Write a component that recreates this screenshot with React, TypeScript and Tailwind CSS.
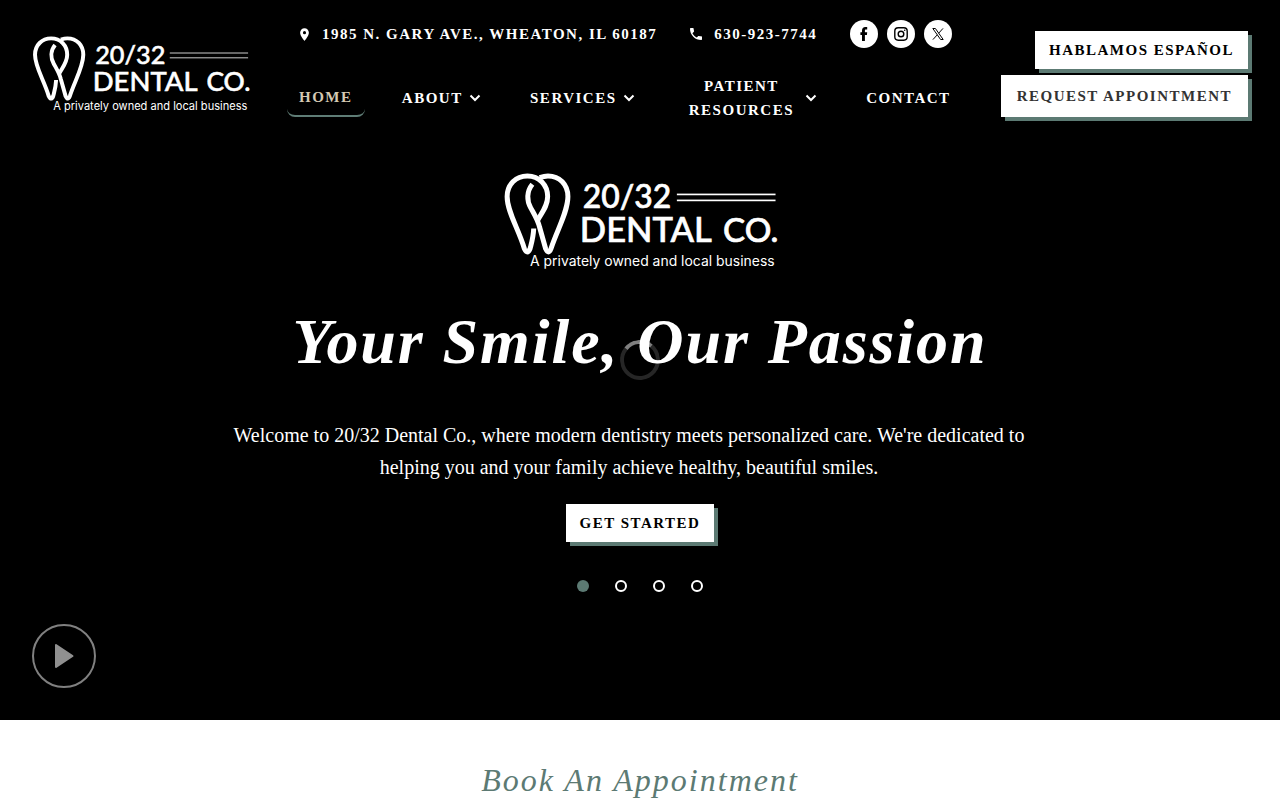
import React from "react";
import { MdLocationOn, MdPhone } from "react-icons/md";

function Logo({ className, lines }: { className: string; lines: string }) {
  return (
    <svg
      viewBox="39 38 822 292"
      className={`overflow-visible ${className}`}
      role="img"
      aria-label="20/32 Dental Co."
    >
      <g fill="none" stroke="#fff" strokeWidth="15" strokeLinejoin="round">
        <path d="M130 205 C129 232 123 250 119 266 Q111 285 102 266 C84 205 50 155 50 109 C50 73 76 47 111 47 C147 47 172 74 172 109 C172 137 156 155 142 180" />
        <path d="M126 72 C108 94 109 122 121 143 C133 165 143 180 148 202 L166 266 Q175 285 182 266 C200 210 233 155 233 109 C233 73 208 47 173 47 Q162 47 148 52" />
      </g>
      <g className={lines}>
        <rect x="561" y="100" width="297" height="5" />
        <rect x="561" y="118" width="297" height="5" />
      </g>
      <g fill="#fff" stroke="#fff" strokeWidth="2" fontWeight="500" className="font-['Lato']">
        <text x="278" y="143" fontSize="96">20/32</text>
        <text x="269" y="246" fontSize="104">DENTAL</text>
        <text x="700" y="246" fontSize="100">CO.</text>
      </g>
      <text x="119" y="318" fontSize="42" fill="#fff" className="font-['Inter']">
        A privately owned and local business
      </text>
    </svg>
  );
}

function Chevron() {
  return (
    <svg viewBox="0 0 12 8" className="h-2 w-3 shrink-0" aria-hidden="true">
      <path d="M1.5 1.5 L6 6 L10.5 1.5" fill="none" stroke="#fff" strokeWidth="2" />
    </svg>
  );
}

function FacebookMark() {
  return (
    <svg viewBox="0 0 14 14" className="size-[14px]" aria-hidden="true">
      <path
        d="M5 14 V7.9 H3.4 V5.2 H5 V3.6 C5 1.3 6.3 0.1 8.3 0.1 H10.2 V2.6 H9 C8.1 2.6 7.9 3 7.9 3.8 V5.2 H10.2 L9.9 7.9 H7.9 V14 Z"
        fill="currentColor"
      />
    </svg>
  );
}

function InstagramMark() {
  return (
    <svg viewBox="0 0 14 14" className="size-[14px]" aria-hidden="true">
      <g fill="none" stroke="currentColor" strokeWidth="1.4">
        <rect x="0.8" y="0.8" width="12.4" height="12.4" rx="3.4" />
        <circle cx="7" cy="7" r="2.8" />
      </g>
      <circle cx="10.7" cy="3.3" r="0.8" fill="currentColor" />
    </svg>
  );
}

function XMark() {
  return (
    <svg viewBox="0 0 12 12" className="size-3" aria-hidden="true">
      <g fill="none" stroke="currentColor" strokeWidth="1">
        <path d="M0.8 0.5 H3.4 L11.2 11.5 H8.6 Z" />
        <path d="M11 0.4 L6.6 5.3 M5.3 6.8 L0.9 11.6" />
      </g>
    </svg>
  );
}

const menus = [
  { label: "About", more: true },
  { label: "Services", more: true },
  { label: "Patient Resources", more: true },
  { label: "Contact", more: false },
];

const caps = "text-[15px] leading-6 font-bold tracking-[1.5px] uppercase";
const social = "flex size-7 items-center justify-center rounded-full bg-white text-black";

export default function App() {
  return (
    <div className="bg-white font-['Liberation_Serif',serif]">
      <div className="relative flex flex-col bg-black text-white">
        <header className="flex items-start px-8 pt-5">
          <a href="#home" className="mt-4 block shrink-0">
            <Logo className="h-[77px] w-[217px]" lines="fill-[#9a9a9a]" />
          </a>

          <div className="ml-[38px] flex-1">
            <div className="flex items-center pl-[10px]">
              <a href="#map" className={`${caps} flex items-center gap-[10px]`}>
                <MdLocationOn className="size-[15px]" />
                1985 N. Gary Ave., Wheaton, IL 60187
              </a>
              <a href="tel:630-923-7744" className={`${caps} ml-[31px] flex items-center gap-[10px]`}>
                <MdPhone className="size-4" />
                630-923-7744
              </a>
              <div className="ml-[33px] flex gap-[9px]">
                <a href="#facebook" aria-label="Facebook" className={social}>
                  <FacebookMark />
                </a>
                <a href="#instagram" aria-label="Instagram" className={social}>
                  <InstagramMark />
                </a>
                <a href="#x" aria-label="X" className={social}>
                  <XMark />
                </a>
              </div>
            </div>

            <nav className="mt-[26px] flex h-12 items-center justify-between">
              <a
                href="#home"
                className={`${caps} rounded-lg border-b-2 border-[#5f7d76] px-3 py-1.5 text-[#d5c9b3]`}
              >
                Home
              </a>
              {menus.map((m) => (
                <a
                  key={m.label}
                  href={`#${m.label}`}
                  className={`${caps} flex items-center gap-1.5 px-3 text-center`}
                >
                  <span className={m.label === "Patient Resources" ? "w-[115px]" : ""}>{m.label}</span>
                  {m.more && <Chevron />}
                </a>
              ))}
            </nav>
          </div>

          <div className="mt-[11px] ml-[38px] flex shrink-0 flex-col items-end gap-1.5">
            <a
              href="#espanol"
              className={`${caps} bg-white px-3.5 py-[7px] text-black shadow-[4px_4px_0_#5c7a73]`}
            >
              Hablamos Español
            </a>
            <a
              href="#request"
              className={`${caps} bg-white px-4 py-[9px] text-[#333] shadow-[4px_4px_0_#5c7a73]`}
            >
              Request Appointment
            </a>
          </div>
        </header>

        <main className="flex flex-col items-center px-8 pt-[51px] pb-8">
          <Logo className="h-[97px] w-[274px]" lines="fill-white" />
          <h1 className="mt-8 text-center text-[64px] leading-[80px] font-bold tracking-[0.03em] italic">
            Your Smile, Our Passion
          </h1>
          <p className="mt-[37px] max-w-[822px] pr-[22px] text-center text-xl leading-8">
            Welcome to 20/32 Dental Co., where modern dentistry meets personalized care. We're
            dedicated to helping you and your family achieve healthy, beautiful smiles.
          </p>
          <a
            href="#start"
            className={`${caps} mt-[21px] bg-white px-3.5 py-[7px] text-black shadow-[4px_4px_0_#5c7a73]`}
          >
            Get Started
          </a>
          <div className="mt-[38px] flex gap-[26px]">
            <button aria-label="Slide 1" className="size-3 rounded-full bg-[#5c7a73]" />
            <button aria-label="Slide 2" className="size-3 rounded-full border-2 border-white" />
            <button aria-label="Slide 3" className="size-3 rounded-full border-2 border-white" />
            <button aria-label="Slide 4" className="size-3 rounded-full border-2 border-white" />
          </div>
          <button
            aria-label="Play"
            className="mt-8 flex size-16 items-center justify-center self-start rounded-full border-2 border-[#808080]"
          >
            <svg viewBox="0 0 20 26" className="h-[26px] w-5" aria-hidden="true">
              <path
                d="M2 2 L18.5 13 L2 24 Z"
                fill="#909090"
                stroke="#909090"
                strokeWidth="2"
                strokeLinejoin="round"
              />
            </svg>
          </button>
        </main>

        <div className="pointer-events-none absolute top-1/2 left-1/2 size-10 -translate-1/2 -rotate-6 rounded-full border-4 border-white/15 border-t-white/50" />
      </div>

      <section className="pt-10 text-center">
        <h2 className="text-[32px] leading-10 tracking-[2px] text-[#5c7a73] italic">
          Book An Appointment
        </h2>
      </section>
    </div>
  );
}
